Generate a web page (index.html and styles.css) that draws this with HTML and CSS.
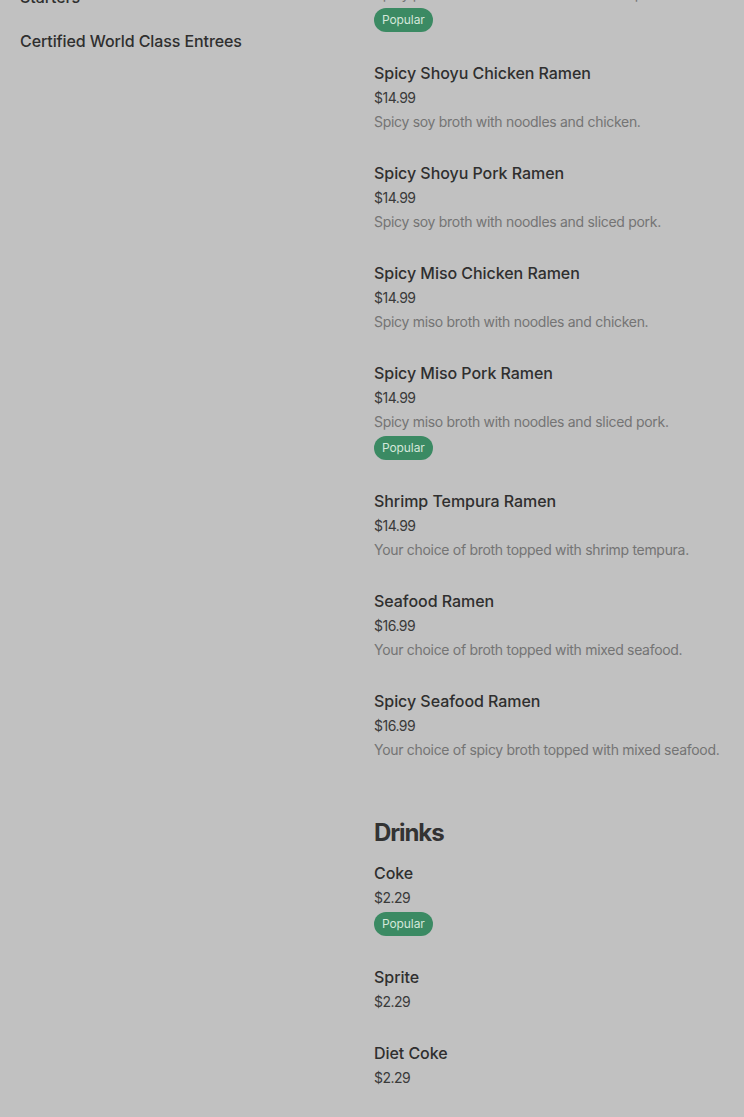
FILE: index.html
```html
<!DOCTYPE html>
<html lang="en">
<head>
<meta charset="utf-8">
<title>Menu</title>
<link rel="stylesheet" href="styles.css">
</head>
<body>
<div class="page">
  <nav class="side">
    <a class="side-link">Starters</a>
    <a class="side-link">Certified World Class Entrees</a>
  </nav>
  <main class="menu">
    <section class="section">
      <div class="item">
        <div class="item-title">Spicy Tonkotsu Pork Ramen</div>
        <div class="item-price">$14.99</div>
        <div class="item-desc">Spicy pork broth with noodles and sliced pork.</div>
        <span class="badge">Popular</span>
      </div>
      <div class="item">
        <div class="item-title">Spicy Shoyu Chicken Ramen</div>
        <div class="item-price">$14.99</div>
        <div class="item-desc">Spicy soy broth with noodles and chicken.</div>
      </div>
      <div class="item">
        <div class="item-title">Spicy Shoyu Pork Ramen</div>
        <div class="item-price">$14.99</div>
        <div class="item-desc">Spicy soy broth with noodles and sliced pork.</div>
      </div>
      <div class="item">
        <div class="item-title">Spicy Miso Chicken Ramen</div>
        <div class="item-price">$14.99</div>
        <div class="item-desc">Spicy miso broth with noodles and chicken.</div>
      </div>
      <div class="item">
        <div class="item-title">Spicy Miso Pork Ramen</div>
        <div class="item-price">$14.99</div>
        <div class="item-desc">Spicy miso broth with noodles and sliced pork.</div>
        <span class="badge">Popular</span>
      </div>
      <div class="item">
        <div class="item-title">Shrimp Tempura Ramen</div>
        <div class="item-price">$14.99</div>
        <div class="item-desc">Your choice of broth topped with shrimp tempura.</div>
      </div>
      <div class="item">
        <div class="item-title">Seafood Ramen</div>
        <div class="item-price">$16.99</div>
        <div class="item-desc">Your choice of broth topped with mixed seafood.</div>
      </div>
      <div class="item">
        <div class="item-title">Spicy Seafood Ramen</div>
        <div class="item-price">$16.99</div>
        <div class="item-desc">Your choice of spicy broth topped with mixed seafood.</div>
      </div>
    </section>
    <section class="section section-next">
      <h2 class="section-title">Drinks</h2>
      <div class="item">
        <div class="item-title">Coke</div>
        <div class="item-price">$2.29</div>
        <span class="badge">Popular</span>
      </div>
      <div class="item">
        <div class="item-title">Sprite</div>
        <div class="item-price">$2.29</div>
      </div>
      <div class="item">
        <div class="item-title">Diet Coke</div>
        <div class="item-price">$2.29</div>
      </div>
    </section>
  </main>
</div>
</body>
</html>
```
FILE: styles.css
```css
html, body {
  margin: 0;
  padding: 0;
  background: #c1c1c1;
}
body {
  font-family: Inter, "Liberation Sans", sans-serif;
  overflow: hidden;
}
.page {
  display: grid;
  grid-template-columns: 354px 1fr;
  margin-top: -67px;
  padding-left: 20px;
}
.side {
  display: flex;
  flex-direction: column;
  gap: 20px;
  padding-top: 52px;
}
.side-link {
  font-size: 16px;
  line-height: 24px;
  font-weight: 500;
  letter-spacing: -0.1px;
  color: #2f2f2f;
  text-decoration: none;
}
.menu {
  display: flex;
  flex-direction: column;
}
.section {
  display: flex;
  flex-direction: column;
}
.section-next {
  margin-top: 28px;
}
.section-title {
  margin: 0 0 12px;
  font-size: 24px;
  line-height: 32px;
  font-weight: 700;
  letter-spacing: -1.1px;
  color: #333333;
}
.item {
  display: flex;
  flex-direction: column;
  align-items: flex-start;
  padding-bottom: 29px;
}
.item-title {
  font-size: 16px;
  line-height: 24px;
  font-weight: 500;
  letter-spacing: -0.05px;
  color: #2f2f2f;
}
.item-price {
  margin-top: 3px;
  font-size: 14px;
  line-height: 20px;
  color: #3a3a3a;
  letter-spacing: -0.5px;
}
.item-desc {
  margin-top: 4px;
  font-size: 14px;
  line-height: 20px;
  letter-spacing: -0.3px;
  color: #747474;
}
.badge {
  margin-top: 4px;
  height: 24px;
  line-height: 24px;
  padding: 0 8px;
  border-radius: 12px;
  background: #3b8a63;
  color: #d3e7da;
  font-size: 12px;
  letter-spacing: -0.1px;
}
```
